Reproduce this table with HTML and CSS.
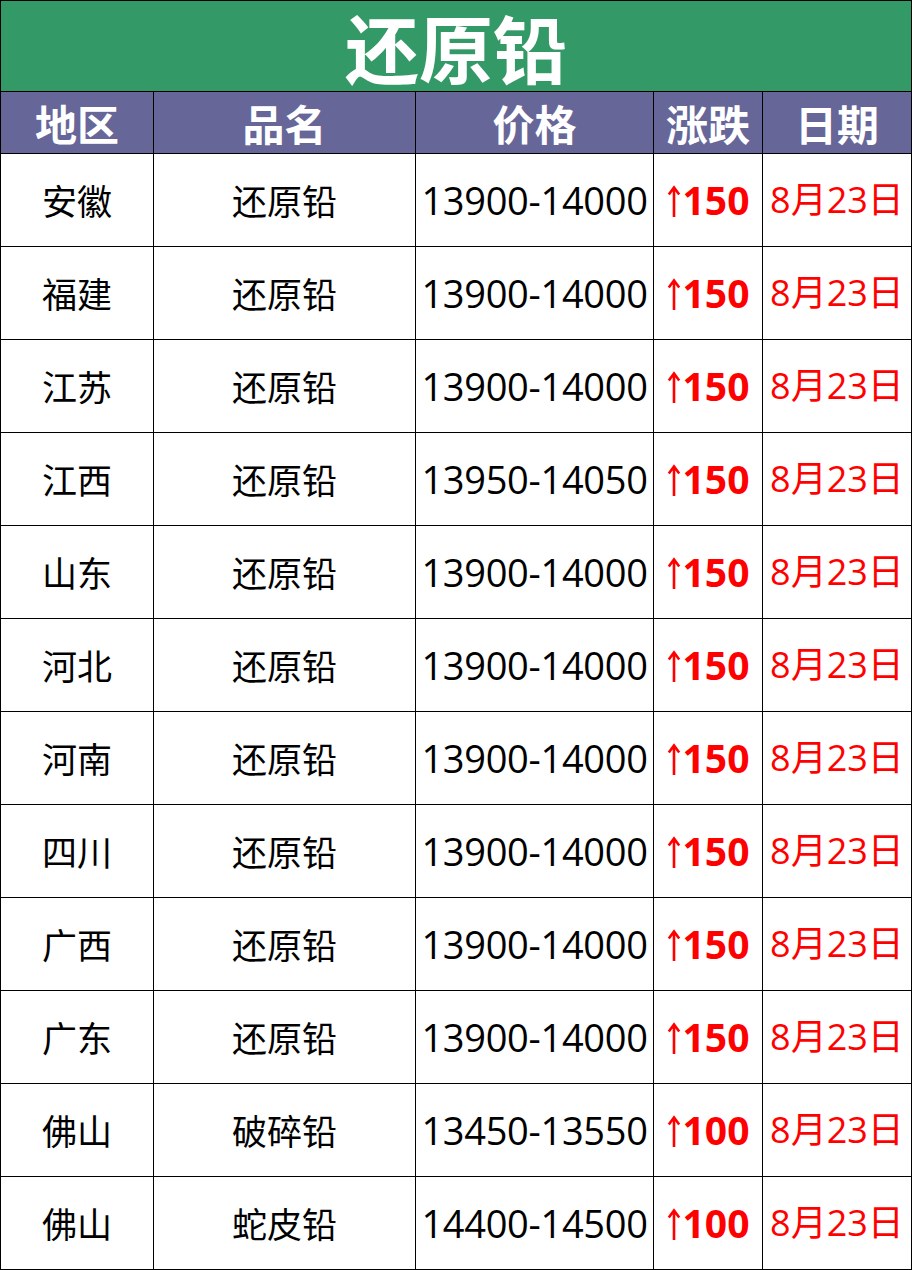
FILE: index.html
```html
<!DOCTYPE html>
<html lang="zh">
<head>
<meta charset="utf-8">
<title>还原铅</title>
<link rel="stylesheet" href="styles.css">
</head>
<body>
<div class="sheet">
  <div class="title">还原铅</div>
  <div class="hd">地区</div><div class="hd">品名</div><div class="hd">价格</div><div class="hd">涨跌</div><div class="hd">日期</div>

  <div class="c">安徽</div><div class="c">还原铅</div><div class="c num">13900-14000</div><div class="c up"><svg class="arr" viewBox="0 0 14 32" width="14" height="32"><path d="M7 2.5V32M1.8 9.5L7 2.5L12.2 9.5"/></svg><span>150</span></div><div class="c date">8月23日</div>
  <div class="c">福建</div><div class="c">还原铅</div><div class="c num">13900-14000</div><div class="c up"><svg class="arr" viewBox="0 0 14 32" width="14" height="32"><path d="M7 2.5V32M1.8 9.5L7 2.5L12.2 9.5"/></svg><span>150</span></div><div class="c date">8月23日</div>
  <div class="c">江苏</div><div class="c">还原铅</div><div class="c num">13900-14000</div><div class="c up"><svg class="arr" viewBox="0 0 14 32" width="14" height="32"><path d="M7 2.5V32M1.8 9.5L7 2.5L12.2 9.5"/></svg><span>150</span></div><div class="c date">8月23日</div>
  <div class="c">江西</div><div class="c">还原铅</div><div class="c num">13950-14050</div><div class="c up"><svg class="arr" viewBox="0 0 14 32" width="14" height="32"><path d="M7 2.5V32M1.8 9.5L7 2.5L12.2 9.5"/></svg><span>150</span></div><div class="c date">8月23日</div>
  <div class="c">山东</div><div class="c">还原铅</div><div class="c num">13900-14000</div><div class="c up"><svg class="arr" viewBox="0 0 14 32" width="14" height="32"><path d="M7 2.5V32M1.8 9.5L7 2.5L12.2 9.5"/></svg><span>150</span></div><div class="c date">8月23日</div>
  <div class="c">河北</div><div class="c">还原铅</div><div class="c num">13900-14000</div><div class="c up"><svg class="arr" viewBox="0 0 14 32" width="14" height="32"><path d="M7 2.5V32M1.8 9.5L7 2.5L12.2 9.5"/></svg><span>150</span></div><div class="c date">8月23日</div>
  <div class="c">河南</div><div class="c">还原铅</div><div class="c num">13900-14000</div><div class="c up"><svg class="arr" viewBox="0 0 14 32" width="14" height="32"><path d="M7 2.5V32M1.8 9.5L7 2.5L12.2 9.5"/></svg><span>150</span></div><div class="c date">8月23日</div>
  <div class="c">四川</div><div class="c">还原铅</div><div class="c num">13900-14000</div><div class="c up"><svg class="arr" viewBox="0 0 14 32" width="14" height="32"><path d="M7 2.5V32M1.8 9.5L7 2.5L12.2 9.5"/></svg><span>150</span></div><div class="c date">8月23日</div>
  <div class="c">广西</div><div class="c">还原铅</div><div class="c num">13900-14000</div><div class="c up"><svg class="arr" viewBox="0 0 14 32" width="14" height="32"><path d="M7 2.5V32M1.8 9.5L7 2.5L12.2 9.5"/></svg><span>150</span></div><div class="c date">8月23日</div>
  <div class="c">广东</div><div class="c">还原铅</div><div class="c num">13900-14000</div><div class="c up"><svg class="arr" viewBox="0 0 14 32" width="14" height="32"><path d="M7 2.5V32M1.8 9.5L7 2.5L12.2 9.5"/></svg><span>150</span></div><div class="c date">8月23日</div>
  <div class="c">佛山</div><div class="c">破碎铅</div><div class="c num">13450-13550</div><div class="c up"><svg class="arr" viewBox="0 0 14 32" width="14" height="32"><path d="M7 2.5V32M1.8 9.5L7 2.5L12.2 9.5"/></svg><span>100</span></div><div class="c date">8月23日</div>
  <div class="c">佛山</div><div class="c">蛇皮铅</div><div class="c num">14400-14500</div><div class="c up"><svg class="arr" viewBox="0 0 14 32" width="14" height="32"><path d="M7 2.5V32M1.8 9.5L7 2.5L12.2 9.5"/></svg><span>100</span></div><div class="c date">8月23日</div>
</div>
</body>
</html>
```

FILE: styles.css
```css
html, body {
  margin: 0;
  padding: 0;
  background: #ffffff;
}

.sheet {
  display: grid;
  grid-template-columns: 152px 261px 237px 108px 148px;
  grid-template-rows: 90px 61px repeat(12, 92px);
  gap: 1px;
  padding: 1px;
  width: 912px;
  box-sizing: border-box;
  background: #000000;
  font-family: "Open Sans", "Noto Sans CJK SC", sans-serif;
}

.sheet > div {
  display: flex;
  align-items: center;
  justify-content: center;
  background: #ffffff;
  white-space: nowrap;
  min-width: 0;
}

.sheet > .title {
  grid-column: 1 / -1;
  background: #339966;
  color: #ffffff;
  font-family: "Noto Sans CJK SC", sans-serif;
  font-weight: 700;
  font-size: 74px;
  line-height: 74px;
}

.sheet > .hd {
  background: #666699;
  color: #ffffff;
  font-family: "Noto Sans CJK SC", sans-serif;
  font-weight: 700;
  font-size: 42px;
  line-height: 42px;
}

.sheet > .c {
  color: #000000;
  font-size: 35px;
  line-height: 36px;
  font-family: "Noto Sans CJK SC", sans-serif;
}

.sheet > .num {
  font-family: "Open Sans", sans-serif;
  font-size: 38px;
  letter-spacing: -0.3px;
}

.sheet > .up {
  color: #ff0000;
  font-family: "Open Sans", sans-serif;
  font-weight: 700;
  font-size: 39px;
  gap: 2px;
}

.arr {
  flex: none;
  fill: none;
  stroke: #ff0000;
  stroke-width: 2.6;
  stroke-linejoin: miter;
  margin-top: 1px;
}

.sheet > .date {
  color: #ff0000;
  font-family: "Open Sans", "Noto Sans CJK SC", sans-serif;
  font-size: 36px;
}
```
